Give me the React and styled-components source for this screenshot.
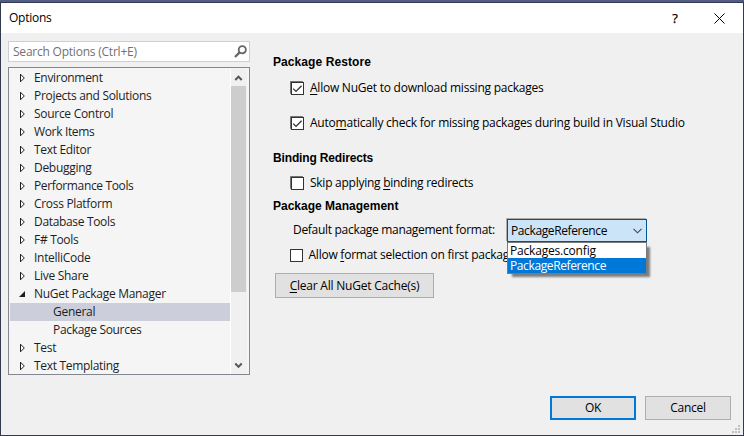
import React from "react";
import styled, { createGlobalStyle } from "styled-components";

const Global = createGlobalStyle`
  * { box-sizing: border-box; }
  body { margin: 0; overflow: hidden; }
`;

const Frame = styled.div`
  width: 744px;
  height: 436px;
  border-top: 2px solid #525d87;
  font: 12px/18px "Open Sans", sans-serif;
  letter-spacing: -0.24px;
  color: #000;
  cursor: default;
`;

const Dialog = styled.div`
  display: flex;
  flex-direction: column;
  height: 434px;
  border: 1px solid #343a4e;
  background: #f0f0f0;
`;

const TitleBar = styled.header`
  display: flex;
  align-items: center;
  flex: 0 0 30px;
  padding: 0 18px 0 8px;
  background: #fff;
`;

const Title = styled.div`
  flex: 1;
`;

const HelpButton = styled.div`
  width: 10px;
  margin: -1px 34px 0 0;
  font-size: 13px;
  text-align: center;
  -webkit-text-stroke: 0.25px #000;
`;

const CloseIcon = styled.svg`
  width: 11px;
  height: 11px;
`;

const Body = styled.div`
  display: flex;
  flex: 0 0 342px;
  padding: 8px 0 0 7px;
`;

const Sidebar = styled.nav`
  display: flex;
  flex-direction: column;
  gap: 5px;
  width: 242px;
`;

const SearchBox = styled.div`
  display: flex;
  align-items: center;
  justify-content: space-between;
  height: 21px;
  padding: 0 2px 0 4px;
  border: 1px solid #ccceda;
  background: #fff;
  color: #717171;
`;

const SearchIcon = styled.svg`
  width: 13px;
  height: 13px;
`;

const TreeBox = styled.div`
  display: flex;
  height: 308px;
  padding: 1px 1px 0;
  border: 1px solid #828790;
  background: #f5f5f5;
  overflow: hidden;
  color: #1e1e1e;
`;

const Tree = styled.div`
  flex: 1;
`;

const TreeRow = styled.div`
  display: flex;
  align-items: center;
  height: 18px;
  padding-left: ${(p) => (p.$child ? 43 : 9)}px;
  background: ${(p) => (p.$selected ? "#cccedb" : "transparent")};
`;

const Expander = styled.svg`
  flex: none;
  width: 8px;
  height: 10px;
  margin-right: 7px;
`;

const Text = styled.span`
  white-space: pre;
  letter-spacing: ${(p) => (p.$track || 0) - 0.24}px;
`;

const Scrollbar = styled.div`
  display: flex;
  flex-direction: column;
  width: 17px;
  margin-right: 1px;
  border-left: 1px solid #fff;
  background: #f0f0f0;
`;

const ScrollArrow = styled.svg`
  flex: none;
  width: 15px;
  height: 17px;
`;

const Thumb = styled.div`
  width: 15px;
  height: 206px;
  margin-bottom: 65px;
  background: #cdcdcd;
`;

const Settings = styled.main`
  display: flex;
  flex-direction: column;
  align-items: flex-start;
  padding: 12px 0 0 23px;
`;

const Heading = styled.h2`
  height: 18px;
  margin: ${(p) => p.$top || 0}px 0 0;
  font: bold 12px/18px "Liberation Sans", Arial, sans-serif;
  letter-spacing: ${(p) => p.$track || 0}px;
`;

const CheckRow = styled.label`
  display: flex;
  align-items: center;
  gap: ${(p) => (p.$flat ? 5.5 : 6)}px;
  height: 18px;
  margin: ${(p) => p.$top || 0}px 0 0 ${(p) => (p.$flat ? 17 : 18)}px;
`;

const CheckBox = styled.span`
  display: flex;
  flex: none;
  width: 13px;
  height: 13px;
  border: 1px solid #333;
  background: #fff;
  box-shadow: ${(p) => (p.$flat ? "none" : "-1px -1px 0 -0.2px #555")};
`;

const CheckMark = styled.svg`
  width: 11px;
  height: 11px;
`;

const FormatRow = styled.div`
  display: flex;
  align-items: center;
  justify-content: space-between;
  width: 374px;
  height: 23px;
  margin-top: 4px;
  padding-left: 20px;
`;

const FormatLabel = styled.div`
  padding-bottom: 2px;
`;

const Combo = styled.div`
  position: relative;
  display: flex;
  align-items: center;
  justify-content: space-between;
  width: 140px;
  height: 23px;
  padding: 0 4px 0 3px;
  border: 1px solid #005499;
  background: #cce4f7;
  box-shadow: -1px -1px 0 #adadad;
`;

const Chevron = styled.svg`
  width: 9px;
  height: 6px;
`;

const Options = styled.div`
  position: absolute;
  z-index: 1;
  top: 22px;
  left: -1px;
  width: 140px;
  border: 1px solid #7a7a7a;
  background: #fff;
  box-shadow: 4px 4px 2px -1px rgba(0, 0, 0, 0.48);
`;

const Option = styled.div`
  height: 15px;
  padding-left: 2px;
  line-height: 15px;
  background: ${(p) => (p.$selected ? "#0078d7" : "#fff")};
  color: ${(p) => (p.$selected ? "#fff" : "#000")};
`;

const Button = styled.div`
  display: flex;
  align-items: center;
  justify-content: center;
  width: ${(p) => p.$width || 86}px;
  height: ${(p) => p.$height || 24}px;
  border: ${(p) => (p.$primary ? "2px solid #0078d7" : "1px solid #adadad")};
  background: #e1e1e1;
`;

const ClearSlot = styled.div`
  margin: 9px 0 0 2px;
`;

const Footer = styled.footer`
  display: flex;
  justify-content: flex-end;
  gap: 9px;
  padding: 21px 0 0;
`;

const Grip = styled.svg`
  align-self: flex-end;
  width: 8px;
  height: 8px;
  margin: 0 3px -13px -8px;
`;

const Key = styled.u`
  text-decoration-thickness: 1px;
  text-underline-offset: 2px;
  text-decoration-skip-ink: none;
`;

const TREE = [
  ["Environment", -0.07],
  ["Projects and Solutions", -0.07],
  ["Source Control", -0.05],
  ["Work Items", -0.1],
  ["Text Editor", -0.07],
  ["Debugging", -0.05],
  ["Performance Tools", -0.12],
  ["Cross Platform", -0.07],
  ["Database Tools", -0.09],
  ["F# Tools", -0.07],
  ["IntelliCode", -0.05],
  ["Live Share", -0.05],
  ["NuGet Package Manager", -0.05, "open"],
  ["General", -0.05, "child", true],
  ["Package Sources", -0.08, "child"],
  ["Test", -0.05],
  ["Text Templating", -0.07],
];

function TreeItem({ label, track, kind, selected }) {
  return (
    <TreeRow $child={kind === "child"} $selected={selected}>
      {kind !== "child" && (
        <Expander viewBox="0 0 8 10">
          {kind === "open" ? (
            <path d="M6 2v6H0z" fill="#1e1e1e" />
          ) : (
            <path d="M1.5 1.2v7.6L5.3 5z" fill="#fff" stroke="#1e1e1e" />
          )}
        </Expander>
      )}
      <Text $track={track}>{label}</Text>
    </TreeRow>
  );
}

function Check({ checked, flat, top, track, children }) {
  return (
    <CheckRow $top={top} $flat={flat}>
      <CheckBox $flat={flat}>
        {checked && (
          <CheckMark viewBox="0 0 11 11">
            <path d="M1.2 5.6 4 8.4l5.6-5.7" fill="none" stroke="#333" strokeWidth="1.3" />
          </CheckMark>
        )}
      </CheckBox>
      <Text $track={track}>{children}</Text>
    </CheckRow>
  );
}

export default function App() {
  return (
    <Frame>
      <Global />
      <Dialog>
        <TitleBar>
          <Title>Options</Title>
          <HelpButton>?</HelpButton>
          <CloseIcon viewBox="0 0 11 11">
            <path d="m.5.5 10 10m0-10-10 10" stroke="#000" strokeWidth="1" />
          </CloseIcon>
        </TitleBar>
        <Body>
          <Sidebar>
            <SearchBox>
              <Text $track={0.02}>Search Options (Ctrl+E)</Text>
              <SearchIcon viewBox="0 0 13 13">
                <circle cx="8.3" cy="4.7" r="3.6" fill="none" stroke="#666" strokeWidth="1.8" />
                <path d="M5.6 7.4 1 12" stroke="#666" strokeWidth="2.3" />
              </SearchIcon>
            </SearchBox>
            <TreeBox>
              <Tree>
                {TREE.map(([label, track, kind, selected]) => (
                  <TreeItem key={label} label={label} track={track} kind={kind} selected={selected} />
                ))}
              </Tree>
              <Scrollbar>
                <ScrollArrow viewBox="0 0 15 17">
                  <path d="m4.3 11 3.2-3.4 3.2 3.4" fill="none" stroke="#555" strokeWidth="2" />
                </ScrollArrow>
                <Thumb />
                <ScrollArrow viewBox="0 0 15 17">
                  <path d="m4.3 6.5 3.2 3.4 3.2-3.4" fill="none" stroke="#555" strokeWidth="2" />
                </ScrollArrow>
              </Scrollbar>
            </TreeBox>
          </Sidebar>
          <Settings>
            <Heading $track={0.08}>Package Restore</Heading>
            <Check checked top={8}>
              <Key>A</Key>llow NuGet to download missing packages
            </Check>
            <Check checked top={17} track={0.02}>
              Auto<Key>m</Key>atically check for missing packages during build in Visual Studio
            </Check>
            <Heading $top={17} $track={-0.15}>Binding Redirects</Heading>
            <Check top={7} track={-0.02}>
              Skip applying <Key>b</Key>inding redirects
            </Check>
            <Heading $top={5}>Package Management</Heading>
            <FormatRow>
              <FormatLabel>
                <Text $track={-0.06}>Default package management format:</Text>
              </FormatLabel>
              <Combo>
                <Text $track={-0.15}>PackageReference</Text>
                <Chevron viewBox="0 0 9 6">
                  <path d="m.5.8 4 4 4-4" fill="none" stroke="#444" strokeWidth="1.1" />
                </Chevron>
                <Options>
                  <Option><Text $track={0.05}>Packages.config</Text></Option>
                  <Option $selected><Text $track={-0.15}>PackageReference</Text></Option>
                </Options>
              </Combo>
            </FormatRow>
            <Check flat top={4}>
              Allow <Key>f</Key>ormat selection on first package
            </Check>
            <ClearSlot>
              <Button $width={159} $height={25}>
                <Text $track={0.02}><Key>C</Key>lear All NuGet Cache(s)</Text>
              </Button>
            </ClearSlot>
          </Settings>
        </Body>
        <Footer>
          <Button $primary>OK</Button>
          <Button>Cancel</Button>
          <Grip viewBox="0 0 8 8">
            <path d="M6 0h2v2H6zM3 3h2v2H3zM6 3h2v2H6zM0 6h2v2H0zM3 6h2v2H3zM6 6h2v2H6z" fill="#bfbfbf" />
          </Grip>
        </Footer>
      </Dialog>
    </Frame>
  );
}
